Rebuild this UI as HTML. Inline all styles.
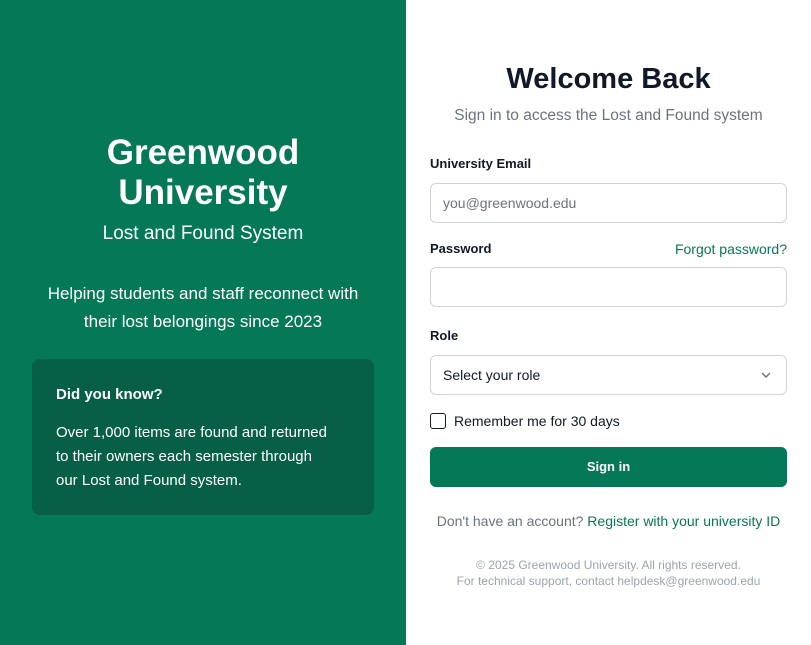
<!DOCTYPE html>
<html><head><meta charset="utf-8"><style>
*{box-sizing:border-box;margin:0;padding:0}
body{width:811px;height:645px;overflow:hidden;font-family:"Liberation Sans",sans-serif;background:#fff;position:relative}
.l{position:absolute;left:0;top:0;width:406px;height:645px;background:#047857;color:#fff}
.c{position:absolute;left:0;width:406px;text-align:center;white-space:nowrap}
.a{position:absolute;white-space:nowrap}
.inp{position:absolute;left:430px;width:357px;height:40px;border:1px solid #d1d5db;border-radius:6px;font-size:14px;padding-left:12px;line-height:38px}
</style></head><body>
<div class="l">
<div class="c" style="top:133px;font-size:35px;font-weight:bold;line-height:40px">Greenwood<br>University</div>
<div class="c" style="top:222px;font-size:19px;line-height:24px">Lost and Found System</div>
<div class="c" style="top:280px;font-size:17px;line-height:28px">Helping students and staff reconnect with<br>their lost belongings since 2023</div>
<div style="position:absolute;left:32px;top:359px;width:342px;height:156px;background:#065f46;border-radius:8px">
<div class="a" style="left:24px;top:27px;font-size:15px;font-weight:bold">Did you know?</div>
<div class="a" style="left:24px;top:62px;font-size:15px;line-height:24px">Over 1,000 items are found and returned<br>to their owners each semester through<br>our Lost and Found system.</div>
</div>
</div>
<div class="a" style="left:406px;width:405px;text-align:center;top:63px;font-size:29px;font-weight:bold;color:#111827">Welcome Back</div>
<div class="a" style="left:406px;width:405px;text-align:center;top:107px;font-size:15.5px;color:#6b7280">Sign in to access the Lost and Found system</div>
<div class="a" style="left:430px;top:156px;font-size:13px;font-weight:bold;color:#111827">University Email</div>
<div class="inp" style="top:183px;color:#6b7280">you@greenwood.edu</div>
<div class="a" style="left:430px;top:241px;font-size:13px;font-weight:bold;color:#111827">Password</div>
<div class="a" style="right:24px;top:241px;font-size:14px;color:#047857">Forgot password?</div>
<div class="inp" style="top:267px"></div>
<div class="a" style="left:430px;top:328px;font-size:13px;font-weight:bold;color:#111827">Role</div>
<div class="inp" style="top:355px;color:#111827">Select your role
<svg style="position:absolute;right:14px;top:14px" width="12" height="10" viewBox="0 0 12 10"><path d="M2 3l4 4 4-4" fill="none" stroke="#6b7280" stroke-width="1.4"/></svg></div>
<div class="a" style="left:430px;top:413px;width:16px;height:16px;border:1.5px solid #111827;border-radius:3px"></div>
<div class="a" style="left:454px;top:413px;font-size:14px;color:#111827">Remember me for 30 days</div>
<div class="a" style="left:430px;top:447px;width:357px;height:40px;background:#047857;border-radius:6px;color:#fff;font-size:13px;font-weight:bold;text-align:center;line-height:40px">Sign in</div>
<div class="a" style="left:406px;width:405px;text-align:center;top:513px;font-size:14px;color:#6b7280">Don't have an account? <span style="color:#047857">Register with your university ID</span></div>
<div class="a" style="left:406px;width:405px;text-align:center;top:557px;font-size:12px;line-height:16px;color:#9ca3af">© 2025 Greenwood University. All rights reserved.<br>For technical support, contact helpdesk@greenwood.edu</div>
</body></html>
